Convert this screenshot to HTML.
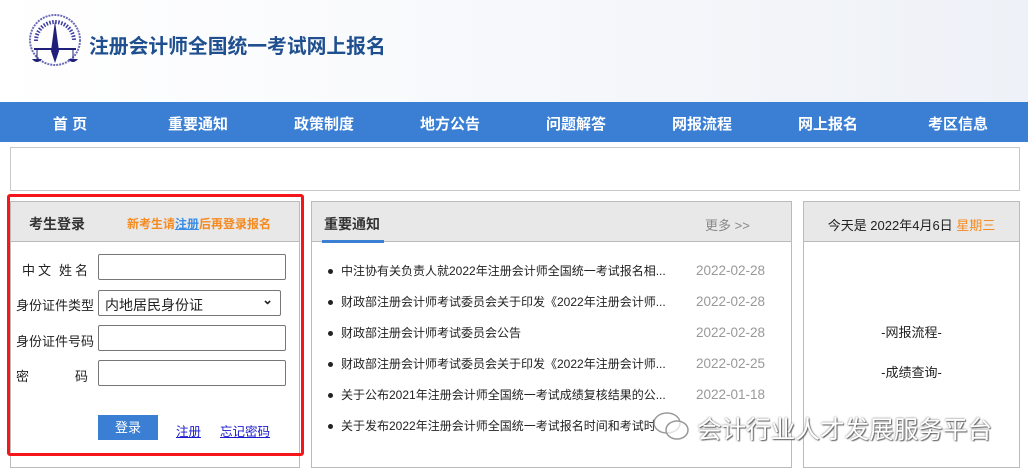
<!DOCTYPE html>
<html><head><meta charset="utf-8"><style>
*{margin:0;padding:0;box-sizing:border-box}
body{width:1028px;height:472px;overflow:hidden;background:#fff;font-family:"Liberation Sans","Noto Sans CJK SC",sans-serif;font-size:13px;color:#222;position:relative}
.hdr{position:absolute;left:0;top:0;width:1028px;height:102px;background:linear-gradient(90deg,#fff,#eef1f7)}
.title{position:absolute;left:89px;top:30px;font-size:19.8px;font-weight:bold;color:#1f4f8f;letter-spacing:0}
.nav{position:absolute;left:0;top:102px;width:1028px;height:40px;background:#3a7fd4}
.nav span{position:absolute;top:11px;color:#fff;font-weight:bold;font-size:15px;transform:translateX(-50%);white-space:nowrap}
.bar{position:absolute;left:10px;top:147px;width:1010px;height:44px;border:1px solid #c8c8c8}
.pnl{position:absolute;top:201px;height:267px;border:1px solid #bbb}
.ph{height:40px;background:#e8e8e8;border-bottom:1px solid #bbb;position:relative}
.red{position:absolute;left:7px;top:194px;width:297px;height:262px;border:3px solid #f5161b;border-radius:3px}
.lbl{position:absolute;left:16px;font-size:13px;color:#222}
.inp{position:absolute;left:98px;width:188px;height:26px;border:1px solid #777;border-radius:2px;background:#fff}
.li{position:absolute;left:328px;font-size:12px;white-space:nowrap}
.li:before{content:"";position:absolute;left:0;top:7px;width:5px;height:5px;border-radius:50%;background:#222}
.li .t{position:absolute;left:13px;top:0}
.li .d{position:absolute;left:368px;top:1px;color:#999;font-size:13.5px}
</style></head><body>
<div class="hdr"></div>
<svg style="position:absolute;left:26px;top:13px" width="60" height="58" viewBox="0 0 60 58">
<circle cx="29" cy="27" r="25" fill="none" stroke="#6a6ab8" stroke-width="2" stroke-dasharray="2 1"/>
<path d="M10 28 A19 19 0 0 1 48 28" fill="none" stroke="#3b3ba0" stroke-width="4" stroke-dasharray="1.5 1.5"/>
<path d="M29 8 L33 38 L29 50 L25 38 Z" fill="#20207a"/>
<line x1="8" y1="36" x2="50" y2="36" stroke="#20207a" stroke-width="2"/>
<path d="M6 46 Q11 52 16 46 Z M42 46 Q47 52 52 46 Z" fill="#20207a"/>
<line x1="11" y1="36" x2="11" y2="46" stroke="#20207a"/><line x1="47" y1="36" x2="47" y2="46" stroke="#20207a"/>
</svg>
<div class="title">注册会计师全国统一考试网上报名</div>
<div class="nav">
<span style="left:70px">首 页</span><span style="left:198px">重要通知</span><span style="left:324px">政策制度</span><span style="left:450px">地方公告</span><span style="left:576px">问题解答</span><span style="left:702px">网报流程</span><span style="left:828px">网上报名</span><span style="left:958px">考区信息</span>
</div>
<div class="bar"></div>

<div class="pnl" style="left:10px;width:290px"><div class="ph">
<span style="position:absolute;left:18px;top:12px;font-size:14px;font-weight:bold;color:#333">考生登录</span>
<span style="position:absolute;left:116px;top:13px;font-size:12px;font-weight:bold;color:#f58a1f">新考生请<u style="color:#3a8ee6">注册</u>后再登录报名</span>
</div></div>
<div class="lbl" style="top:260px;left:22px;white-space:nowrap">中<span style="margin-left:3px">文</span><span style="margin-left:8px">姓</span><span style="margin-left:3px">名</span></div>
<div class="inp" style="top:254px"></div>
<div class="lbl" style="top:295px">身份证件类型</div>
<div class="inp" style="top:290px;width:183px;font-size:14px;padding:4px 6px">内地居民身份证<span style="position:absolute;right:7px;top:1px;font-size:13px;font-weight:bold">⌄</span></div>
<div class="lbl" style="top:331px">身份证件号码</div>
<div class="inp" style="top:325px"></div>
<div class="lbl" style="top:366px">密<span style="margin-left:46px">码</span></div>
<div class="inp" style="top:360px"></div>
<div style="position:absolute;left:98px;top:415px;width:60px;height:25px;background:#3a7fd4;color:#fff;text-align:center;line-height:25px;font-size:13px">登录</div>
<a style="position:absolute;left:176px;top:421px;color:#1a1ad0;text-decoration:underline;font-size:12.5px">注册</a>
<a style="position:absolute;left:220px;top:421px;color:#1a1ad0;text-decoration:underline;font-size:12.5px">忘记密码</a>
<div class="red"></div>

<div class="pnl" style="left:311px;width:481px"><div class="ph">
<span style="position:absolute;left:12px;top:12px;font-size:14px;font-weight:bold;color:#333">重要通知</span>
<div style="position:absolute;left:10px;bottom:-2px;width:62px;height:3px;background:#3a7fd4"></div>
<span style="position:absolute;left:393px;top:13px;font-size:13px;color:#888">更多 &gt;&gt;</span>
</div></div>
<div class="li" style="top:262px"><span class="t">中注协有关负责人就2022年注册会计师全国统一考试报名相...</span><span class="d">2022-02-28</span></div>
<div class="li" style="top:293px"><span class="t">财政部注册会计师考试委员会关于印发《2022年注册会计师...</span><span class="d">2022-02-28</span></div>
<div class="li" style="top:324px"><span class="t">财政部注册会计师考试委员会公告</span><span class="d">2022-02-28</span></div>
<div class="li" style="top:355px"><span class="t">财政部注册会计师考试委员会关于印发《2022年注册会计师...</span><span class="d">2022-02-25</span></div>
<div class="li" style="top:386px"><span class="t">关于公布2021年注册会计师全国统一考试成绩复核结果的公...</span><span class="d">2022-01-18</span></div>
<div class="li" style="top:417px"><span class="t">关于发布2022年注册会计师全国统一考试报名时间和考试时</span></div>

<div class="pnl" style="left:803px;width:217px"><div class="ph">
<span style="position:absolute;left:0;width:100%;text-align:center;top:13px;font-size:13px">今天是 2022年4月6日 <span style="color:#f58a1f">星期三</span></span>
</div></div>
<div style="position:absolute;left:803px;width:217px;text-align:center;top:322px">-网报流程-</div>
<div style="position:absolute;left:803px;width:217px;text-align:center;top:362px">-成绩查询-</div>

<svg style="position:absolute;left:651px;top:410px" width="40" height="32" viewBox="0 0 40 32"><ellipse cx="16" cy="13" rx="13" ry="10" fill="rgba(255,255,255,.7)" stroke="#999" stroke-width="1.5"/><ellipse cx="26" cy="20" rx="11" ry="9" fill="rgba(255,255,255,.7)" stroke="#999" stroke-width="1.5"/></svg>
<div style="position:absolute;left:697px;top:410px;font-size:24.6px;color:#fff;text-shadow:0 0 2px #666,1px 1px 1px #666;white-space:nowrap">会计行业人才发展服务平台</div>
</body></html>
